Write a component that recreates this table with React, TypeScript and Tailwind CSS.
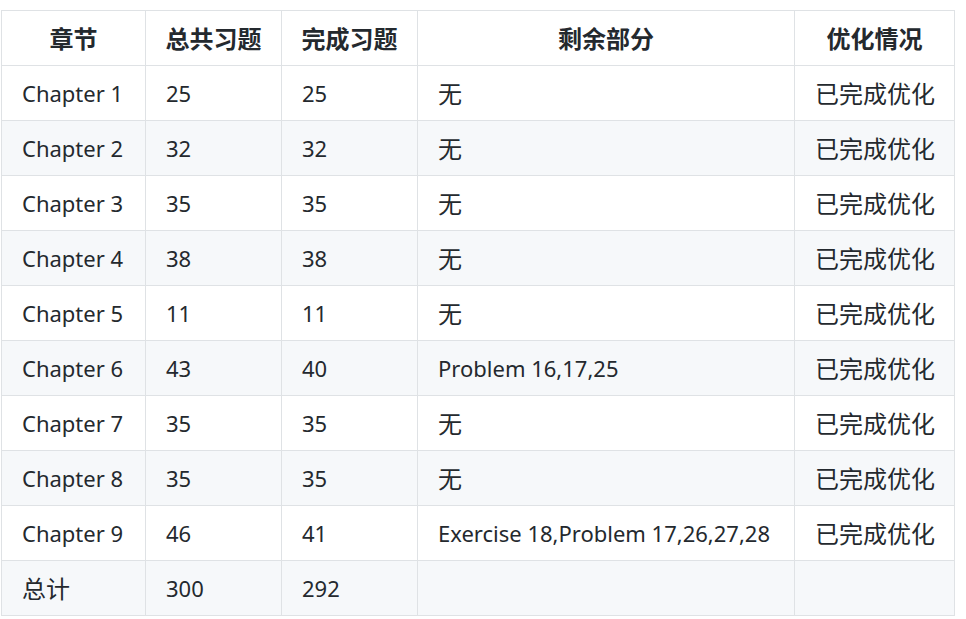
import React from 'react';

const rows: [string, string, string, string, string][] = [
  ['Chapter 1', '25', '25', '无', '已完成优化'],
  ['Chapter 2', '32', '32', '无', '已完成优化'],
  ['Chapter 3', '35', '35', '无', '已完成优化'],
  ['Chapter 4', '38', '38', '无', '已完成优化'],
  ['Chapter 5', '11', '11', '无', '已完成优化'],
  ['Chapter 6', '43', '40', 'Problem 16,17,25', '已完成优化'],
  ['Chapter 7', '35', '35', '无', '已完成优化'],
  ['Chapter 8', '35', '35', '无', '已完成优化'],
  ['Chapter 9', '46', '41', 'Exercise 18,Problem 17,26,27,28', '已完成优化'],
  ['总计', '300', '292', '', ''],
];

const headers = ['章节', '总共习题', '完成习题', '剩余部分', '优化情况'];

// CJK glyphs sit a bit larger than the latin text in the reference
const isCjk = (s: string) => /[\u4e00-\u9fff]/.test(s);

export default function App() {
  return (
    <div
      className="bg-white w-[966px] h-[619px] pt-[10px] pl-px text-[#24292e]"
      style={{ fontFamily: '"Noto Sans", "Noto Sans CJK SC", sans-serif' }}
    >
      <table className="border-collapse table-fixed w-[954px] text-[22px] leading-[1.4]">
        <colgroup>
          <col className="w-[144px]" />
          <col className="w-[136px]" />
          <col className="w-[136px]" />
          <col className="w-[377px]" />
          <col className="w-[160px]" />
        </colgroup>
        <thead>
          <tr className="h-[55px]">
            {headers.map((h) => (
              <th
                key={h}
                className="border border-[#dfe2e5] px-1 pt-px font-bold text-center text-[24px] whitespace-nowrap"
              >
                {h}
              </th>
            ))}
          </tr>
        </thead>
        <tbody>
          {rows.map((r, i) => (
            <tr key={i} className={`h-[55px] ${i % 2 === 1 ? 'bg-[#f6f8fa]' : 'bg-white'}`}>
              {r.map((c, j) => (
                <td
                  key={j}
                  className={`border border-[#dfe2e5] px-5 pt-px whitespace-nowrap ${isCjk(c) ? 'text-[24px]' : ''}`}
                >
                  {c}
                </td>
              ))}
            </tr>
          ))}
        </tbody>
      </table>
    </div>
  );
}
